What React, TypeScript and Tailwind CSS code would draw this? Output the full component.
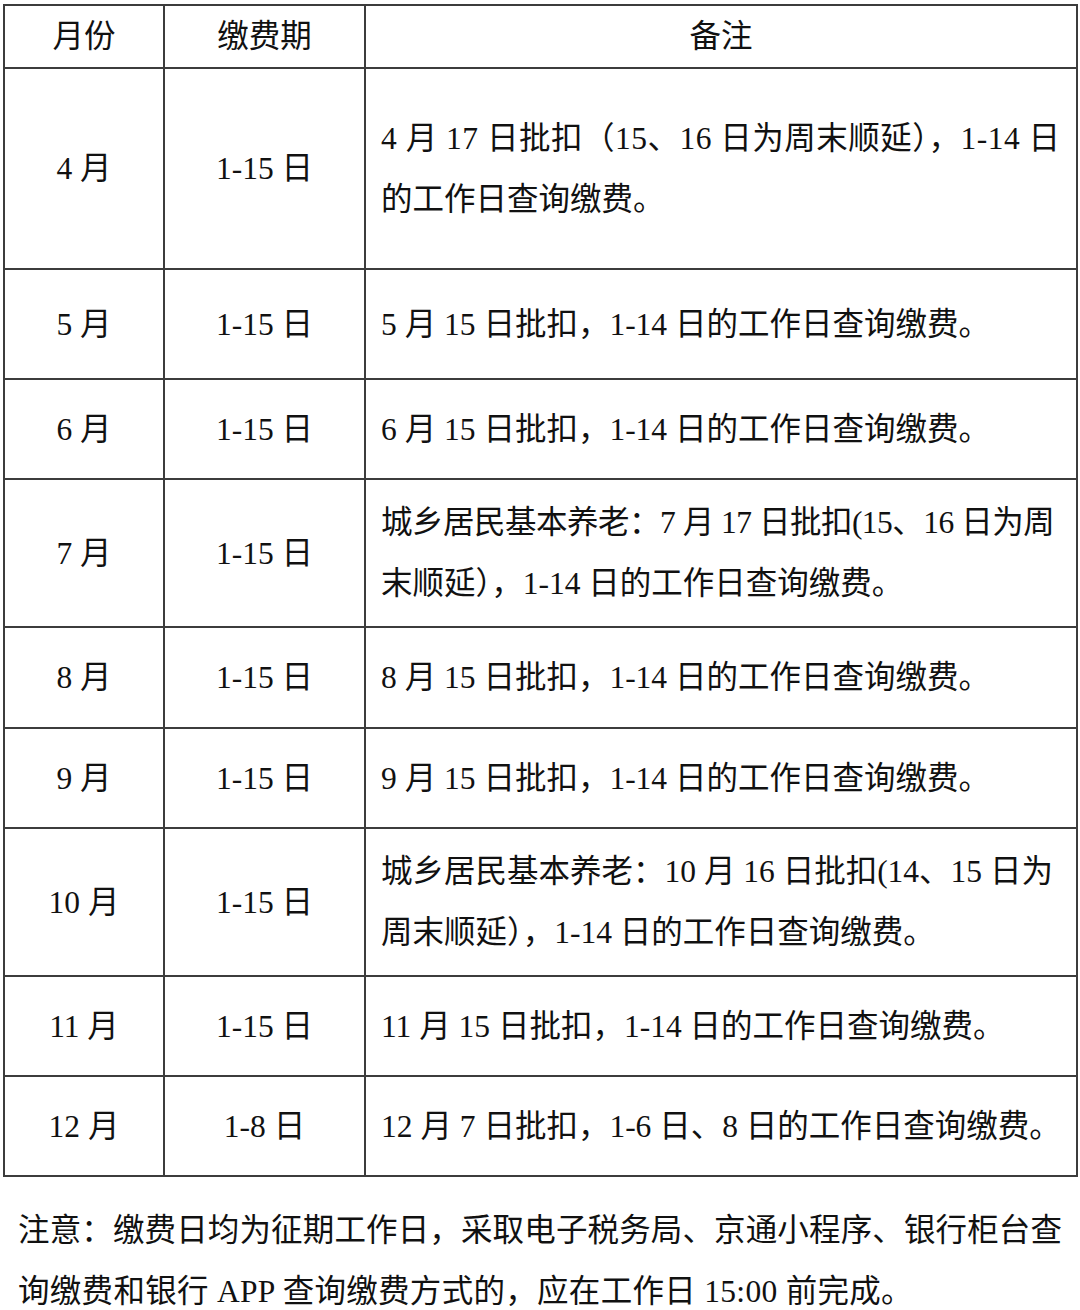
import React from "react"

type Row = { month: string; period: string; note: React.ReactNode; h: string }

const rows: Row[] = [
  {
    month: "4 月",
    period: "1-15 日",
    note: (
      <>
        <span className="tracking-[0.5px]">4 月 17 日批扣（15、16 日为周末顺延），1-14 日</span>
        <br />
        的工作日查询缴费。
      </>
    ),
    h: "h-[201px]",
  },
  { month: "5 月", period: "1-15 日", note: "5 月 15 日批扣，1-14 日的工作日查询缴费。", h: "h-[110px]" },
  { month: "6 月", period: "1-15 日", note: "6 月 15 日批扣，1-14 日的工作日查询缴费。", h: "h-[100px]" },
  {
    month: "7 月",
    period: "1-15 日",
    note: (
      <>
        <span className="tracking-[-0.5px]">城乡居民基本养老：7 月 17 日批扣(15、16 日为周</span>
        <br />
        末顺延），1-14 日的工作日查询缴费。
      </>
    ),
    h: "h-[148px]",
  },
  { month: "8 月", period: "1-15 日", note: "8 月 15 日批扣，1-14 日的工作日查询缴费。", h: "h-[101px]" },
  { month: "9 月", period: "1-15 日", note: "9 月 15 日批扣，1-14 日的工作日查询缴费。", h: "h-[100px]" },
  {
    month: "10 月",
    period: "1-15 日",
    note: (
      <>
        城乡居民基本养老：10 月 16 日批扣(14、15 日为
        <br />
        周末顺延），1-14 日的工作日查询缴费。
      </>
    ),
    h: "h-[148px]",
  },
  { month: "11 月", period: "1-15 日", note: "11 月 15 日批扣，1-14 日的工作日查询缴费。", h: "h-[100px]" },
  { month: "12 月", period: "1-8 日", note: "12 月 7 日批扣，1-6 日、8 日的工作日查询缴费。", h: "h-[100px]" },
]

const cell = "border-2 border-[#3c3c3c] p-0 align-middle"

export default function App() {
  return (
    <div className="w-[1080px] h-[1310px] bg-white text-[#111] text-[31.5px] leading-[61px] font-['Liberation_Serif','Noto_Sans_CJK_SC',serif] overflow-hidden">
      <table className="border-collapse table-fixed w-[1073px] ml-[3px] mt-[4px]">
        <colgroup>
          <col className="w-[160px]" />
          <col className="w-[201px]" />
          <col className="w-[712px]" />
        </colgroup>
        <thead>
          <tr className="h-[62px]">
            <th className={`${cell} font-normal text-center`}>月份</th>
            <th className={`${cell} font-normal text-center`}>缴费期</th>
            <th className={`${cell} font-normal text-center`}>备注</th>
          </tr>
        </thead>
        <tbody>
          {rows.map((r) => (
            <tr key={r.month} className={r.h}>
              <td className={`${cell} text-center`}>{r.month}</td>
              <td className={`${cell} text-center`}>{r.period}</td>
              <td className={`${cell} text-left pl-[15px] whitespace-nowrap`}>{r.note}</td>
            </tr>
          ))}
        </tbody>
      </table>

      {/* footnote */}
      <div className="mt-[23px] px-[18px]">
        <p className="w-[1044px] whitespace-nowrap text-justify [text-align-last:justify]">
          注意：缴费日均为征期工作日，采取电子税务局、京通小程序、银行柜台查
        </p>
        <p className="whitespace-nowrap tracking-[0.3px]">询缴费和银行 APP 查询缴费方式的，应在工作日 15:00 前完成。</p>
      </div>
    </div>
  )
}
